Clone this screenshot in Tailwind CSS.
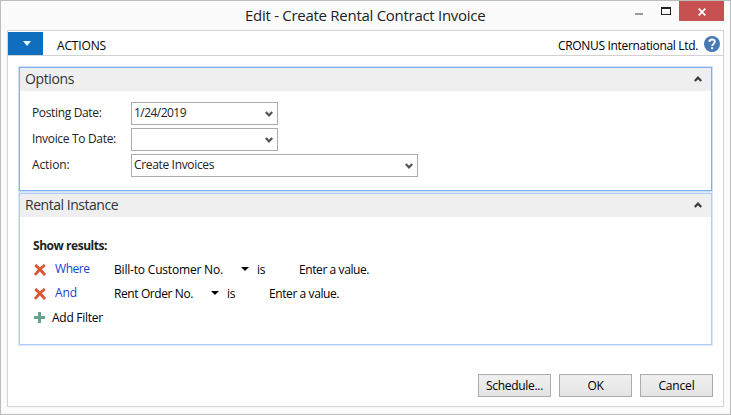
<!DOCTYPE html>
<html lang="en">
<head>
<meta charset="utf-8">
<title>Edit - Create Rental Contract Invoice</title>
<script src="https://cdn.jsdelivr.net/npm/@tailwindcss/browser@4"></script>
</head>
<body class="overflow-hidden">
<svg class="hidden">
  <symbol id="down" viewBox="0 0 8 6"><path d="M.8 1 4 4.300 7.200 1" fill="none" stroke="#555" stroke-width="2.200"/></symbol>
  <symbol id="up" viewBox="0 0 8 6"><path d="M.8 5 4 1.700 7.200 5" fill="none" stroke="#3c3c3c" stroke-width="2.200"/></symbol>
  <symbol id="remove" viewBox="0 0 12 12"><path d="M1.200 1C4 3 8 7.500 11 11M10.800 1C7.500 3.500 4 7 1 11" fill="none" stroke="#db5432" stroke-width="2.800"/></symbol>
</svg>
<div class="flex h-[415px] w-[731px] flex-col border border-[#bcbcbc] bg-[#fbfbfb] px-[6px] pb-[7px] font-['Open_Sans',sans-serif] text-[12px] leading-[16px] text-black">
  <header class="flex h-[29px] shrink-0 items-start">
    <h1 class="ml-[238px] mt-[4px] w-[250px] whitespace-nowrap text-[15px] leading-[20px] tracking-[-0.28px] text-[#222]">Edit - Create Rental Contract Invoice</h1>
    <div class="ml-auto flex h-[20px] items-start">
      <div class="mr-[18px] mt-[12px] h-[2px] w-[8px] bg-[#999]"></div>
      <div class="mr-[8px] mt-[6px] h-[8px] w-[10px] border border-t-2 border-[#222]"></div>
      <div class="flex h-[20px] w-[45px] items-center justify-center bg-[#c75050]">
        <svg class="mt-px h-[8px] w-[8px]" viewBox="0 0 8 8"><path d="M.7 .7 7.300 7.300M7.300 .7 .7 7.300" stroke="#fff" stroke-width="1.700"/></svg>
      </div>
    </div>
  </header>
  <main class="flex w-[717px] flex-1 flex-col border border-[#d2d2d2] bg-white">
    <nav class="flex h-[25px] shrink-0 items-start border-b border-[#d2d2d2]">
      <div class="mt-px flex h-[23px] w-[35px] items-center justify-center bg-[#106ebe]">
        <svg class="ml-[2px] h-[5px] w-[8px]" viewBox="0 0 8 5"><path d="M0 0h8L4 5z" fill="#e8f4fc"/></svg>
      </div>
      <span class="ml-[14px] mt-[7px] tracking-[-0.15px]">ACTIONS</span>
      <span class="ml-auto mt-[7px] tracking-[-0.33px]">CRONUS International Ltd.</span>
      <svg class="ml-[6px] mr-[3px] mt-[5px] h-[16px] w-[16px]" viewBox="0 0 16 16"><circle cx="8" cy="8" r="8" fill="#447ab5"/><path d="M5.300 5.900C5.400 2.700 10.900 2.600 10.800 5.800C10.800 7.700 8.200 7.800 8.200 9.900" fill="none" stroke="#fff" stroke-width="1.900"/><path d="M7.100 11.200h2.100v2H7.100z" fill="#fff"/></svg>
    </nav>
    <div class="ml-[10px] mt-[10px] w-[695px]">
      <section class="h-[126px] border border-[#cfe0fb]">
        <div class="h-[124px] border border-[#7fb0fa]">
          <div class="flex h-[23px] items-start bg-[#efefef] pl-[5px] pr-[9px]">
            <h2 class="mt-px text-[14px] leading-[20px] tracking-[-0.38px] text-[#333]">Options</h2>
            <svg class="ml-auto mt-[8px] h-[6px] w-[8px]"><use href="#up"/></svg>
          </div>
          <div class="flex flex-col gap-[3px] pl-[12px] pt-[11px] text-[#222]">
            <div class="flex h-[23px]"><span class="mt-[3px] w-[99px] tracking-[-0.35px]">Posting Date:</span>
              <div class="flex w-[147px] items-start border border-[#ababb0] pl-[2px] pr-[4px]"><span class="mt-[2px] tracking-[-0.54px]">1/24/2019</span><svg class="ml-auto mt-[8px] h-[6px] w-[8px]"><use href="#down"/></svg></div></div>
            <div class="flex h-[23px]"><span class="mt-[3px] w-[99px] tracking-[-0.32px]">Invoice To Date:</span>
              <div class="flex w-[147px] items-start border border-[#ababb0] pl-[2px] pr-[4px]"><svg class="ml-auto mt-[8px] h-[6px] w-[8px]"><use href="#down"/></svg></div></div>
            <div class="flex h-[23px]"><span class="mt-[3px] w-[99px] tracking-[-0.12px]">Action:</span>
              <div class="flex w-[287px] items-start border border-[#ababb0] pl-[2px] pr-[4px]"><span class="mt-[2px] tracking-[-0.34px]">Create Invoices</span><svg class="ml-auto mt-[8px] h-[6px] w-[8px]"><use href="#down"/></svg></div></div>
          </div>
        </div>
      </section>
      <section class="h-[154px] border border-[#dbe8fc]">
        <div class="h-[152px] border border-[#b0cdfb]">
          <div class="flex h-[23px] items-start bg-[#efefef] pl-[5px] pr-[9px]">
            <h2 class="mt-px text-[14px] leading-[20px] tracking-[-0.47px] text-[#333]">Rental Instance</h2>
            <svg class="ml-auto mt-[8px] h-[6px] w-[8px]"><use href="#up"/></svg>
          </div>
          <div class="pl-[13px] pt-[21px]">
            <div class="h-[24px] font-bold tracking-[-0.46px] text-[#222]">Show results:</div>
            <div class="flex h-[24px] items-start"><svg class="ml-[1px] mt-[2px] h-[12px] w-[12px]"><use href="#remove"/></svg>
              <span class="-mt-px ml-[9px] w-[59px] text-[#1a3fd0] tracking-[-0.44px]">Where</span><span class="w-[127px] tracking-[-0.19px]">Bill-to Customer No.</span>
              <svg class="mt-[5px] h-[4px] w-[8px]" viewBox="0 0 8 4"><path d="M0 0h8L4 4z"/></svg><span class="ml-[8px] w-[42px] tracking-[-0.3px]">is</span><span class="tracking-[-0.41px]">Enter a value.</span></div>
            <div class="flex h-[24px] items-start"><svg class="ml-[1px] mt-[2px] h-[12px] w-[12px]"><use href="#remove"/></svg>
              <span class="-mt-px ml-[9px] w-[59px] text-[#1a3fd0] tracking-[-0.1px]">And</span><span class="w-[97px] tracking-[-0.4px]">Rent Order No.</span>
              <svg class="mt-[5px] h-[4px] w-[8px]" viewBox="0 0 8 4"><path d="M0 0h8L4 4z"/></svg><span class="ml-[8px] w-[42px] tracking-[-0.3px]">is</span><span class="tracking-[-0.41px]">Enter a value.</span></div>
            <div class="flex h-[24px] items-start"><svg class="ml-[1px] mt-[2px] h-[11px] w-[11px]" viewBox="0 0 11 11"><path d="M4 0h3v4h4v3H7v4H4V7H0V4h4z" fill="#67a48e"/></svg>
              <span class="ml-[7px] tracking-[-0.26px]">Add Filter</span></div>
          </div>
        </div>
      </section>
    </div>
    <footer class="mr-[10px] mt-[28px] flex justify-end gap-[8px]">
      <button class="h-[23px] w-[73px] border border-[#acacac] bg-linear-to-b from-[#f0f0f0] to-[#e4e4e4] tracking-[-0.3px]">Schedule...</button>
      <button class="h-[23px] w-[73px] border border-[#acacac] bg-linear-to-b from-[#f0f0f0] to-[#e4e4e4] tracking-[-0.34px]">OK</button>
      <button class="h-[23px] w-[73px] border border-[#acacac] bg-linear-to-b from-[#f0f0f0] to-[#e4e4e4] tracking-[-0.18px]">Cancel</button>
    </footer>
  </main>
</div>
</body>
</html>
